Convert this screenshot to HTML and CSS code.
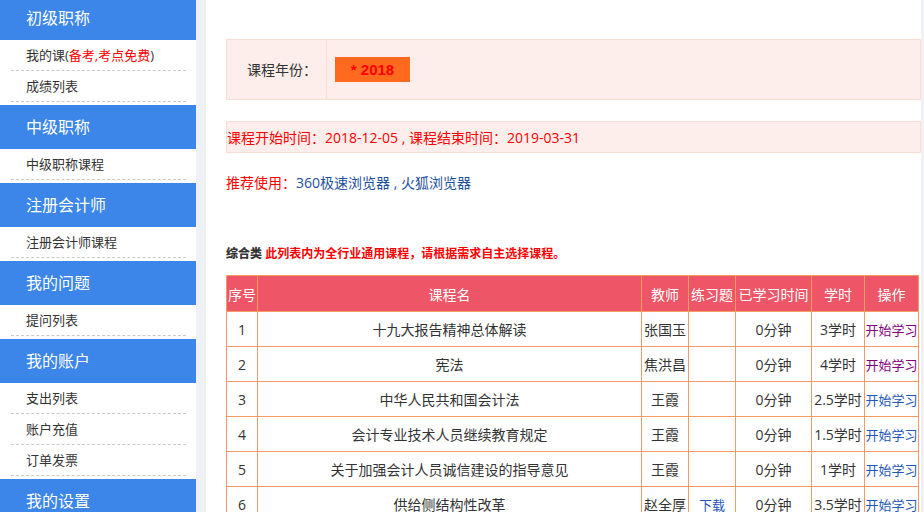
FILE: index.html
```html
<!DOCTYPE html>
<html lang="zh-CN">

<head>
    <meta charset="UTF-8">
    <title>我的课程</title>
    <link rel="stylesheet" href="styles.css">
</head>

<body>
    <div class="page">
        <!-- Left menu -->
        <div class="sidebar">
            <div class="menu-title">初级职称</div>
            <a class="menu-item" href="#">我的课(<span class="red">备考,考点免费</span>)</a>
            <a class="menu-item" href="#">成绩列表</a>

            <div class="menu-title">中级职称</div>
            <a class="menu-item" href="#">中级职称课程</a>

            <div class="menu-title">注册会计师</div>
            <a class="menu-item" href="#">注册会计师课程</a>

            <div class="menu-title">我的问题</div>
            <a class="menu-item" href="#">提问列表</a>

            <div class="menu-title">我的账户</div>
            <a class="menu-item" href="#">支出列表</a>
            <a class="menu-item" href="#">账户充值</a>
            <a class="menu-item" href="#">订单发票</a>

            <div class="menu-title">我的设置</div>
        </div>

        <!-- Main content -->
        <div class="main">
            <div class="year-box">
                <div class="year-label">课程年份：</div>
                <div class="year-options">
                    <span class="year-btn">* 2018</span>
                </div>
            </div>

            <div class="date-bar">课程开始时间：2018-12-05 , 课程结束时间：2019-03-31</div>

            <p class="browser-tip"><span class="red">推荐使用：</span><span class="blue">360极速浏览器 , 火狐浏览器</span></p>

            <p class="list-note"><b>综合类</b> <span class="red">此列表内为全行业通用课程，请根据需求自主选择课程。</span></p>

            <table class="course-table">
                <thead>
                    <tr>
                        <th class="col-no">序号</th>
                        <th>课程名</th>
                        <th class="col-teacher">教师</th>
                        <th class="col-ex">练习题</th>
                        <th class="col-time">已学习时间</th>
                        <th class="col-hour">学时</th>
                        <th class="col-op">操作</th>
                    </tr>
                </thead>
                <tbody>
                    <tr>
                        <td>1</td>
                        <td>十九大报告精神总体解读</td>
                        <td>张国玉</td>
                        <td></td>
                        <td>0分钟</td>
                        <td>3学时</td>
                        <td><a class="visited" href="#">开始学习</a></td>
                    </tr>
                    <tr>
                        <td>2</td>
                        <td>宪法</td>
                        <td>焦洪昌</td>
                        <td></td>
                        <td>0分钟</td>
                        <td>4学时</td>
                        <td><a class="visited" href="#">开始学习</a></td>
                    </tr>
                    <tr>
                        <td>3</td>
                        <td>中华人民共和国会计法</td>
                        <td>王霞</td>
                        <td></td>
                        <td>0分钟</td>
                        <td>2.5学时</td>
                        <td><a href="#">开始学习</a></td>
                    </tr>
                    <tr>
                        <td>4</td>
                        <td>会计专业技术人员继续教育规定</td>
                        <td>王霞</td>
                        <td></td>
                        <td>0分钟</td>
                        <td>1.5学时</td>
                        <td><a href="#">开始学习</a></td>
                    </tr>
                    <tr>
                        <td>5</td>
                        <td>关于加强会计人员诚信建设的指导意见</td>
                        <td>王霞</td>
                        <td></td>
                        <td>0分钟</td>
                        <td>1学时</td>
                        <td><a href="#">开始学习</a></td>
                    </tr>
                    <tr>
                        <td>6</td>
                        <td>供给侧结构性改革</td>
                        <td>赵全厚</td>
                        <td><a href="#">下载</a></td>
                        <td>0分钟</td>
                        <td>3.5学时</td>
                        <td><a href="#">开始学习</a></td>
                    </tr>
                </tbody>
            </table>
        </div>
    </div>
</body>

</html>
```

FILE: styles.css
```css
body {
    margin: 0;
    padding: 0;
    font-family: "Open Sans", "Noto Sans CJK SC", sans-serif;
    font-size: 14px;
    color: #333;
    background-color: #f0f1f5;
    overflow: hidden;
}

a {
    text-decoration: none;
}

.red {
    color: #f00;
}

.blue {
    color: #1d4fa0;
}

.page {
    display: flex;
    height: 512px;
    align-items: flex-start;
}

/* Left menu */
.sidebar {
    width: 196px;
    margin-top: -4px;
    background-color: white;
    display: flex;
    flex-direction: column;
}

.menu-title {
    height: 44px;
    line-height: 44px;
    padding-left: 26px;
    background-color: #3b86e8;
    color: white;
    font-size: 16px;
}

.menu-item {
    height: 30px;
    line-height: 30px;
    margin: 0 10px 0 11px;
    padding-left: 15px;
    border-bottom: 1px dashed #c8c8c8;
    color: #333;
    font-size: 13px;
}

.menu-item + .menu-title {
    margin-top: 3px;
}

/* Main content */
.main {
    width: 715px;
    height: 512px;
    margin-left: 10px;
    padding: 39px 0 0 20px;
    box-sizing: border-box;
    background-color: white;
}

.year-box {
    display: flex;
    height: 61px;
    background-color: #fdeeeb;
    border: 1px solid #fbdcd5;
    box-sizing: border-box;
}

.year-label {
    width: 100px;
    padding-right: 9px;
    box-sizing: border-box;
    border-right: 1px solid #fbdcd5;
    text-align: right;
    line-height: 59px;
    font-size: 14px;
}

.year-options {
    display: flex;
    align-items: center;
    padding-left: 8px;
}

.year-btn {
    width: 75px;
    height: 25px;
    line-height: 25px;
    text-align: center;
    background-color: #ff6a1f;
    color: #f00;
    font-family: "Liberation Sans", Arial, sans-serif;
    font-weight: bold;
    font-size: 15px;
}

.date-bar {
    margin-top: 21px;
    height: 32px;
    line-height: 31px;
    background-color: #fdeeeb;
    border: 1px solid #fbdcd5;
    box-sizing: border-box;
    color: #f00;
    font-size: 14px;
}

.browser-tip {
    margin: 17px 0 0;
    font-size: 14px;
    line-height: 26px;
}

.list-note {
    margin: 49px 0 0;
    font-size: 12px;
    line-height: 18px;
    font-weight: bold;
}

/* Course table */
.course-table {
    margin-top: 12px;
    width: 693px;
    border-collapse: collapse;
    table-layout: fixed;
}

.course-table th,
.course-table td {
    border: 1px solid #f49a62;
    text-align: center;
    padding: 0;
    white-space: nowrap;
    overflow: hidden;
}

.course-table th {
    height: 35px;
    background-color: #ee5566;
    color: white;
    font-weight: normal;
    font-size: 14px;
}

.course-table td {
    height: 34px;
    font-size: 14px;
    color: #333;
}

.course-table .col-no { width: 30px; }
.course-table .col-teacher { width: 46px; }
.course-table .col-ex { width: 46px; }
.course-table .col-time { width: 75px; }
.course-table .col-hour { width: 52px; }
.course-table .col-op { width: 53px; }

.course-table td a {
    color: #1d56b8;
    font-size: 13px;
}

.course-table td a.visited {
    color: #800080;
}
```
